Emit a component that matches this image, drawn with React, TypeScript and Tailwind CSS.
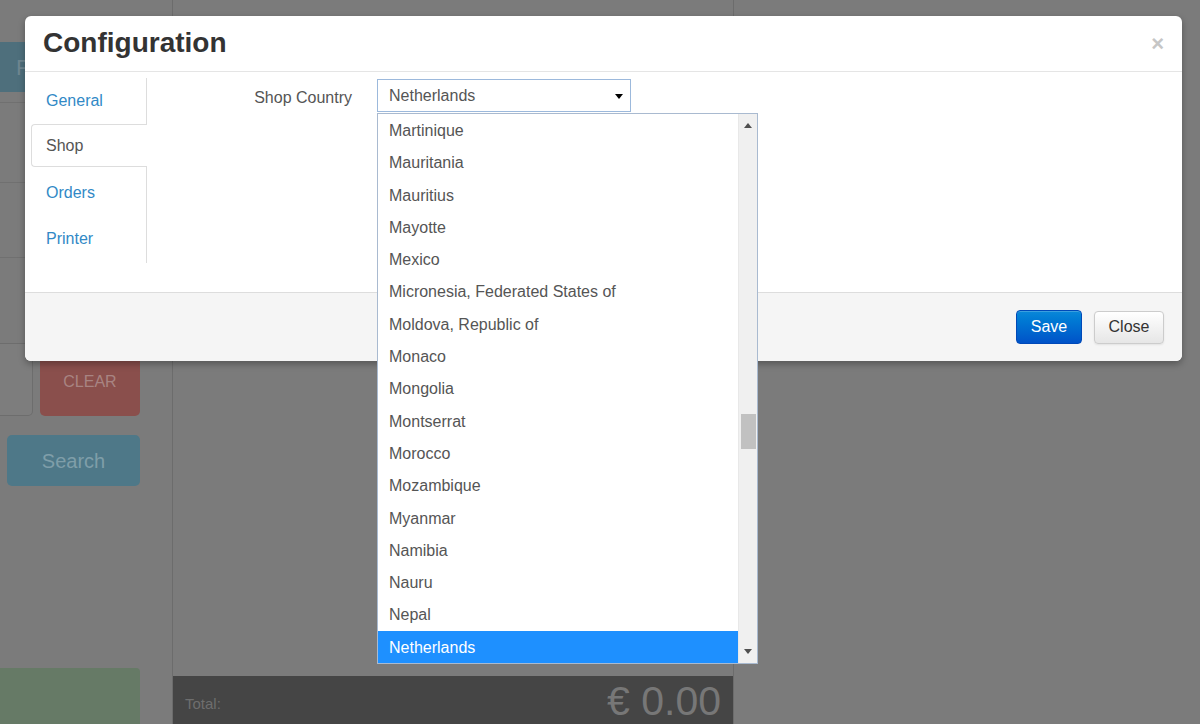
const countries = [
  'Martinique',
  'Mauritania',
  'Mauritius',
  'Mayotte',
  'Mexico',
  'Micronesia, Federated States of',
  'Moldova, Republic of',
  'Monaco',
  'Mongolia',
  'Montserrat',
  'Morocco',
  'Mozambique',
  'Myanmar',
  'Namibia',
  'Nauru',
  'Nepal',
  'Netherlands'
]

const tabs = ['General', 'Shop', 'Orders', 'Printer']

function Triangle({ up = false, className }: { up?: boolean; className?: string }) {
  return (
    <svg className={className} width="8" height="5" viewBox="0 0 8 5">
      <path d={up ? 'M0 5 L4 0 L8 5 Z' : 'M0 0 L8 0 L4 5 Z'} fill="currentColor" />
    </svg>
  )
}

// dimmed POS screen that sits behind the modal backdrop
function BackgroundPage() {
  return (
    <div className="flex h-full">
      <div className="relative flex w-[140px] flex-col">
        <div className="h-[42px]" />
        <div className="flex h-[50px] items-center bg-[#4e6f7c] pl-[16px] text-[22px] text-[#6f8791]">P</div>
        <div className="h-[11px] border-b border-[#707070]" />
        <div className="h-[80px] border-b border-[#707070]" />
        <div className="h-[75px] border-b border-[#707070]" />
        <div className="h-[85px]" />
        <div className="flex h-[73px] gap-[7px]">
          <div className="w-[33px] rounded-r-[5px] border border-l-0 border-[#6d6d6d] bg-[#7d7d7d]" />
          <div className="flex flex-1 items-start justify-center rounded-[5px] bg-[#8a4f4c] pt-[27px] text-[16px] text-[#a88482]">
            CLEAR
          </div>
        </div>
        <div className="h-[19px]" />
        <div className="ml-[7px] flex h-[51px] items-center justify-center rounded-[5px] bg-[#4e7888] text-[20px] text-[#7f9ea9]">
          Search
        </div>
        <div className="flex-1" />
        <div className="h-[56px] rounded-tr-[4px] bg-[#667a66]" />
      </div>
      <div className="w-[33px] border-r border-[#6c6c6c]" />
      <div className="flex w-[561px] flex-col justify-end border-r border-[#6c6c6c]">
        <div className="flex h-[48px] items-end justify-between bg-[#454545] pl-[12px] pr-[12px]">
          <span className="pb-[9px] text-[15px] text-[#6e6e6e]">Total:</span>
          <span className="text-[41px] leading-[46px] text-[#777777]">€ 0.00</span>
        </div>
      </div>
      <div className="flex-1" />
    </div>
  )
}

function TabNav() {
  return (
    <ul className="ml-[6px] flex h-[185px] w-[116px] flex-col border-r border-[#dddddd]">
      {tabs.map((tab) => {
        const active = tab === 'Shop'
        return (
          <li key={tab} className="mb-[3px]">
            {active ?
              <div className="-mr-px flex h-[43px] items-center rounded-l-[4px] border border-r-0 border-[#dddddd] bg-white pl-[14px] pt-px text-[16px] text-[#555555]">
                {tab}
              </div>
            : <div className="flex h-[43px] items-center pl-[15px] pt-[2px] text-[16px] text-[#3189c6]">{tab}</div>}
          </li>
        )
      })}
    </ul>
  )
}

function CountrySelect() {
  return (
    <div className="relative">
      <div className="flex h-[33px] w-[254px] items-center justify-between border border-[#9cb9dc] bg-white pl-[11px] pr-[7px] pt-px text-[16px] text-[#555555]">
        <span>Netherlands</span>
        <Triangle className="text-black" />
      </div>
      <div className="absolute left-0 top-[34px] z-10 flex h-[551px] w-[381px] border border-[#a9bad0] bg-white">
        <ul className="flex-1">
          {countries.map((c) => (
            <li
              key={c}
              className={
                c === 'Netherlands' ?
                  'h-[32.3px] bg-[#1e90ff] pl-[11px] text-[16px] leading-[33px] text-white'
                : 'h-[32.3px] pl-[11px] text-[16px] leading-[33px] text-[#555555]'
              }
            >
              {c}
            </li>
          ))}
        </ul>
        <div className="flex w-[19px] flex-col items-center border-l border-[#e8e8e8] bg-[#f0f0f0] py-[9px]">
          <Triangle up className="text-[#505050]" />
          <div className="h-[286px]" />
          <div className="h-[35px] w-[15px] bg-[#c1c1c1]" />
          <div className="flex-1" />
          <Triangle className="text-[#505050]" />
        </div>
      </div>
    </div>
  )
}

function ConfigModal() {
  return (
    <div className="absolute left-[25px] top-[16px] w-[1157px] rounded-[6px] bg-white shadow-[0_3px_7px_rgba(0,0,0,0.3)]">
      <div className="flex h-[56px] items-center justify-between border-b border-[#e5e5e5] pl-[18px] pr-[18px]">
        <h3 className="pb-[2px] text-[28px] font-bold text-[#333333]">Configuration</h3>
        <span className="text-[22px] font-bold leading-none text-[#c6c6c6]">×</span>
      </div>
      <div className="flex h-[220px] pt-[6px]">
        <TabNav />
        <div className="mt-[1px] flex items-start">
          <label className="w-[206px] pr-px pt-[7px] text-right text-[16px] text-[#555555]">Shop Country</label>
          <div className="ml-[24px]">
            <CountrySelect />
          </div>
        </div>
      </div>
      <div className="flex h-[69px] items-center justify-end gap-[12px] rounded-b-[6px] border-t border-[#dddddd] bg-[#f5f5f5] pr-[18px]">
        <button className="h-[34px] w-[66px] rounded-[4px] border border-[#0049b8] bg-gradient-to-b from-[#0a88d8] to-[#0052c8] text-[16px] text-white shadow-[inset_0_1px_0_rgba(255,255,255,0.2)]">
          Save
        </button>
        <button className="h-[33px] w-[70px] rounded-[4px] border border-[#cccccc] bg-gradient-to-b from-white to-[#e6e6e6] text-[16px] text-[#333333] shadow-[0_1px_2px_rgba(0,0,0,0.08)]">
          Close
        </button>
      </div>
    </div>
  )
}

export default function App() {
  return (
    <div className="relative h-[724px] w-[1200px] overflow-hidden bg-[#7b7b7b] font-['Liberation_Sans',Arial,sans-serif]">
      <BackgroundPage />
      <ConfigModal />
    </div>
  )
}
